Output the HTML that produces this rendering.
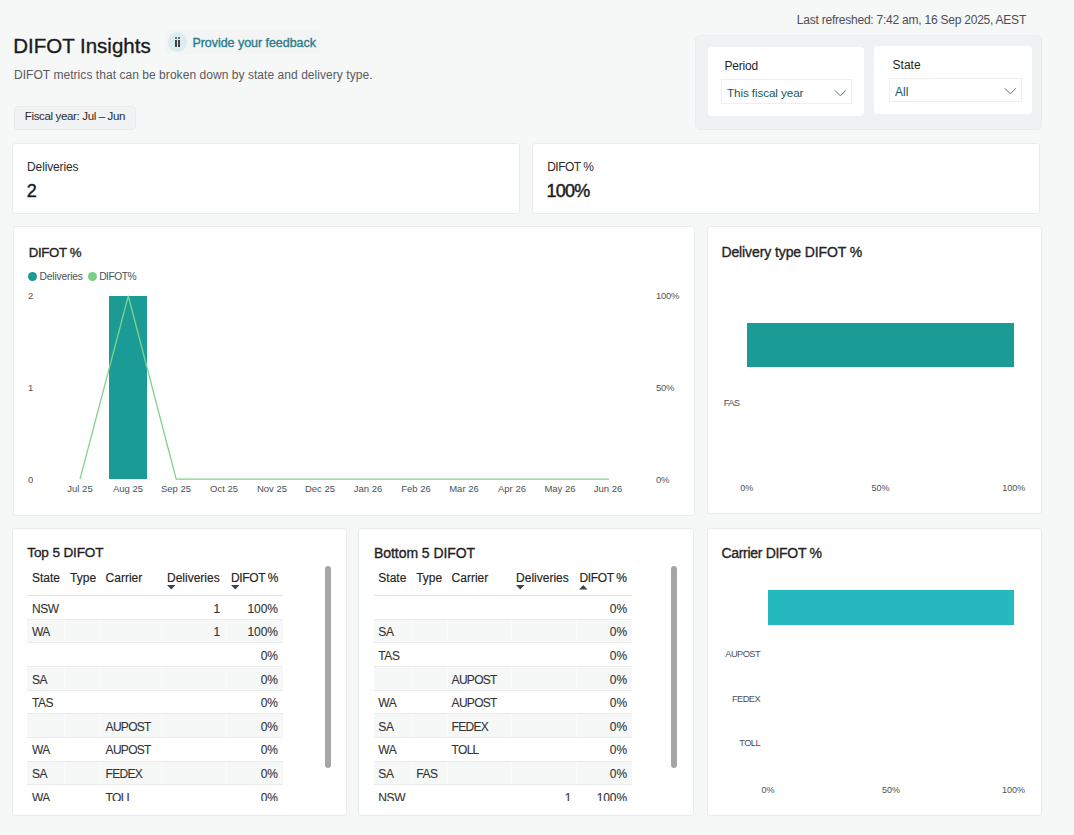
<!DOCTYPE html>
<html><head><meta charset="utf-8"><title>DIFOT Insights</title>
<style>
html,body{margin:0;padding:0;}
body{width:1074px;height:835px;overflow:hidden;background:#f6f7f7;position:relative;font-family:"Liberation Sans",sans-serif;}
.t{position:absolute;white-space:nowrap;}
.r{position:absolute;}
</style></head><body>
<div class="t" style="right:48.00px;top:13.74px;font-size:12px;line-height:12px;color:#4b4f54;letter-spacing:-0.23px;">Last refreshed: 7:42 am, 16 Sep 2025, AEST</div>
<div class="t" style="left:13.20px;top:35.65px;font-size:20.5px;line-height:20.5px;color:#1b1b1b;-webkit-text-stroke:0.35px #1b1b1b;">DIFOT Insights</div>
<div class="r" style="left:165.00px;top:30.00px;width:155.00px;height:24.00px;background:#f3f4f4;border-radius:4px;"></div>
<div class="r" style="left:167.70px;top:32.20px;width:19.40px;height:19.40px;background:#dbedf2;border-radius:50%;"></div>
<div class="r" style="left:174.80px;top:37.20px;width:2.30px;height:1.80px;background:#3f4244;border-radius:1px;"></div>
<div class="r" style="left:177.80px;top:37.20px;width:2.30px;height:1.80px;background:#3f4244;border-radius:1px;"></div>
<div class="r" style="left:174.80px;top:40.20px;width:2.30px;height:6.60px;background:#3f4244;"></div>
<div class="r" style="left:177.80px;top:40.20px;width:2.30px;height:6.60px;background:#3f4244;"></div>
<div class="t" style="left:192.40px;top:37.22px;font-size:12.5px;line-height:12.5px;color:#2b7c89;letter-spacing:-0.04px;-webkit-text-stroke:0.35px #2b7c89;">Provide your feedback</div>
<div class="t" style="left:14.00px;top:69.24px;font-size:12px;line-height:12px;color:#565b61;letter-spacing:0.05px;">DIFOT metrics that can be broken down by state and delivery type.</div>
<div class="r" style="left:14.00px;top:106.00px;width:122.00px;height:24.00px;background:#f0f2f3;border:1px solid #e7e9eb;border-radius:4px;box-sizing:border-box;"></div>
<div class="t" style="left:24.80px;top:110.67px;font-size:11.5px;line-height:11.5px;color:#2b2b2b;letter-spacing:-0.35px;">Fiscal year: Jul – Jun</div>
<div class="r" style="left:695.00px;top:35.00px;width:346.50px;height:94.50px;background:#eff1f3;border:1px solid #e9ebed;border-radius:5px;box-sizing:border-box;"></div>
<div class="r" style="left:708.00px;top:47.00px;width:156.00px;height:69.00px;background:#fff;border-radius:4px;"></div>
<div class="t" style="left:724.50px;top:59.64px;font-size:12px;line-height:12px;color:#1f1f1f;letter-spacing:-0.2px;">Period</div>
<div class="r" style="left:721.00px;top:79.00px;width:131.00px;height:24.50px;background:#fff;border:1px solid #eeefef;box-sizing:border-box;"></div>
<div class="t" style="left:727.00px;top:87.10px;font-size:11.7px;line-height:11.7px;color:#145a59;letter-spacing:-0.1px;">This fiscal year</div>
<svg class="r" style="left:833px;top:88px" width="15" height="10"><polyline points="1.8,2.3 7.3,7.8 12.8,2.3" fill="none" stroke="#3d7b7b" stroke-width="1"/></svg>
<div class="r" style="left:874.00px;top:46.00px;width:158.00px;height:68.00px;background:#fff;border-radius:4px;"></div>
<div class="t" style="left:892.60px;top:58.84px;font-size:12px;line-height:12px;color:#1f1f1f;">State</div>
<div class="r" style="left:889.00px;top:77.50px;width:133.00px;height:24.50px;background:#fff;border:1px solid #eeefef;box-sizing:border-box;"></div>
<div class="t" style="left:895.00px;top:86.24px;font-size:12px;line-height:12px;color:#145a59;">All</div>
<svg class="r" style="left:1002.5px;top:86px" width="15" height="10"><polyline points="1.8,2.3 7.3,7.8 12.8,2.3" fill="none" stroke="#3d7b7b" stroke-width="1"/></svg>
<div class="r" style="left:12.00px;top:143.00px;width:508.00px;height:71.00px;background:#fff;border:1px solid #e8eaec;border-radius:3.5px;box-sizing:border-box;"></div>
<div class="t" style="left:27.10px;top:161.44px;font-size:12px;line-height:12px;color:#2b2b2b;letter-spacing:-0.15px;">Deliveries</div>
<div class="t" style="left:26.80px;top:182.36px;font-size:18px;line-height:18px;color:#1b1b1b;-webkit-text-stroke:0.45px #1b1b1b;">2</div>
<div class="r" style="left:532.00px;top:143.00px;width:508.00px;height:71.00px;background:#fff;border:1px solid #e8eaec;border-radius:3.5px;box-sizing:border-box;"></div>
<div class="t" style="left:547.20px;top:161.24px;font-size:12px;line-height:12px;color:#2b2b2b;letter-spacing:-0.5px;">DIFOT %</div>
<div class="t" style="left:546.50px;top:182.36px;font-size:18px;line-height:18px;color:#1b1b1b;letter-spacing:-0.75px;-webkit-text-stroke:0.45px #1b1b1b;">100%</div>
<div class="r" style="left:13.00px;top:226.00px;width:682.00px;height:290.00px;background:#fff;border:1px solid #e8eaec;border-radius:3.5px;box-sizing:border-box;"></div>
<div class="t" style="left:28.70px;top:245.83px;font-size:13.2px;line-height:13.2px;color:#252423;letter-spacing:-0.3px;-webkit-text-stroke:0.35px #252423;">DIFOT %</div>
<div class="r" style="left:28.00px;top:272.00px;width:9.00px;height:9.00px;background:#1b9b95;border-radius:50%;"></div>
<div class="t" style="left:39.60px;top:271.68px;font-size:10.3px;line-height:10.3px;color:#4b5157;letter-spacing:-0.2px;">Deliveries</div>
<div class="r" style="left:87.70px;top:272.00px;width:9.00px;height:9.00px;background:#7ccf88;border-radius:50%;"></div>
<div class="t" style="left:99.20px;top:271.68px;font-size:10.3px;line-height:10.3px;color:#4b5157;letter-spacing:-0.5px;">DIFOT%</div>
<div class="t" style="left:28.00px;top:290.96px;font-size:9.5px;line-height:9.5px;color:#555;">2</div>
<div class="t" style="left:28.00px;top:382.96px;font-size:9.5px;line-height:9.5px;color:#555;">1</div>
<div class="t" style="left:28.00px;top:474.96px;font-size:9.5px;line-height:9.5px;color:#555;">0</div>
<div class="t" style="left:656.00px;top:291.16px;font-size:9.5px;line-height:9.5px;color:#555;letter-spacing:-0.3px;">100%</div>
<div class="t" style="left:656.00px;top:383.16px;font-size:9.5px;line-height:9.5px;color:#555;letter-spacing:-0.3px;">50%</div>
<div class="t" style="left:656.00px;top:475.16px;font-size:9.5px;line-height:9.5px;color:#555;letter-spacing:-0.3px;">0%</div>
<div class="r" style="left:109.00px;top:296.00px;width:38.00px;height:183.00px;background:#1b9b95;"></div>
<svg class="r" style="left:0;top:0" width="700" height="520"><polyline points="80,479.2 128.3,296 176.2,479.2 609,479.2" fill="none" stroke="#80d18b" stroke-width="1.3" stroke-linejoin="round"/></svg>
<div class="t" style="left:-120.00px;width:400px;text-align:center;top:483.56px;font-size:9.5px;line-height:9.5px;color:#4b5157;">Jul 25</div>
<div class="t" style="left:-72.00px;width:400px;text-align:center;top:483.56px;font-size:9.5px;line-height:9.5px;color:#4b5157;">Aug 25</div>
<div class="t" style="left:-24.00px;width:400px;text-align:center;top:483.56px;font-size:9.5px;line-height:9.5px;color:#4b5157;">Sep 25</div>
<div class="t" style="left:24.00px;width:400px;text-align:center;top:483.56px;font-size:9.5px;line-height:9.5px;color:#4b5157;">Oct 25</div>
<div class="t" style="left:72.00px;width:400px;text-align:center;top:483.56px;font-size:9.5px;line-height:9.5px;color:#4b5157;">Nov 25</div>
<div class="t" style="left:120.00px;width:400px;text-align:center;top:483.56px;font-size:9.5px;line-height:9.5px;color:#4b5157;">Dec 25</div>
<div class="t" style="left:168.00px;width:400px;text-align:center;top:483.56px;font-size:9.5px;line-height:9.5px;color:#4b5157;">Jan 26</div>
<div class="t" style="left:216.00px;width:400px;text-align:center;top:483.56px;font-size:9.5px;line-height:9.5px;color:#4b5157;">Feb 26</div>
<div class="t" style="left:264.00px;width:400px;text-align:center;top:483.56px;font-size:9.5px;line-height:9.5px;color:#4b5157;">Mar 26</div>
<div class="t" style="left:312.00px;width:400px;text-align:center;top:483.56px;font-size:9.5px;line-height:9.5px;color:#4b5157;">Apr 26</div>
<div class="t" style="left:360.00px;width:400px;text-align:center;top:483.56px;font-size:9.5px;line-height:9.5px;color:#4b5157;">May 26</div>
<div class="t" style="left:408.00px;width:400px;text-align:center;top:483.56px;font-size:9.5px;line-height:9.5px;color:#4b5157;">Jun 26</div>
<div class="r" style="left:707.00px;top:226.00px;width:335.00px;height:288.00px;background:#fff;border:1px solid #e8eaec;border-radius:3.5px;box-sizing:border-box;"></div>
<div class="t" style="left:721.40px;top:244.95px;font-size:14px;line-height:14px;color:#252423;letter-spacing:-0.1px;-webkit-text-stroke:0.35px #252423;">Delivery type DIFOT %</div>
<div class="r" style="left:746.70px;top:322.80px;width:267.00px;height:43.80px;background:#1b9b95;"></div>
<div class="t" style="left:723.70px;top:399.13px;font-size:9.3px;line-height:9.3px;color:#4b5157;letter-spacing:-0.6px;">FAS</div>
<div class="t" style="left:546.70px;width:400px;text-align:center;top:484.08px;font-size:9px;line-height:9px;color:#4b5157;">0%</div>
<div class="t" style="left:680.40px;width:400px;text-align:center;top:484.08px;font-size:9px;line-height:9px;color:#4b5157;">50%</div>
<div class="t" style="left:813.70px;width:400px;text-align:center;top:484.08px;font-size:9px;line-height:9px;color:#4b5157;">100%</div>
<div class="r" style="left:707.00px;top:528.00px;width:335.00px;height:288.00px;background:#fff;border:1px solid #e8eaec;border-radius:3.5px;box-sizing:border-box;"></div>
<div class="t" style="left:721.40px;top:545.95px;font-size:14px;line-height:14px;color:#252423;letter-spacing:-0.3px;-webkit-text-stroke:0.35px #252423;">Carrier DIFOT %</div>
<div class="r" style="left:768.00px;top:590.00px;width:245.60px;height:34.50px;background:#25b9bf;"></div>
<div class="t" style="right:314.00px;top:649.63px;font-size:9.3px;line-height:9.3px;color:#4b5157;letter-spacing:-0.6px;">AUPOST</div>
<div class="t" style="right:314.00px;top:694.53px;font-size:9.3px;line-height:9.3px;color:#4b5157;letter-spacing:-0.6px;">FEDEX</div>
<div class="t" style="right:314.00px;top:739.43px;font-size:9.3px;line-height:9.3px;color:#4b5157;letter-spacing:-0.6px;">TOLL</div>
<div class="t" style="left:567.90px;width:400px;text-align:center;top:786.18px;font-size:9px;line-height:9px;color:#4b5157;">0%</div>
<div class="t" style="left:691.00px;width:400px;text-align:center;top:786.18px;font-size:9px;line-height:9px;color:#4b5157;">50%</div>
<div class="t" style="left:813.60px;width:400px;text-align:center;top:786.18px;font-size:9px;line-height:9px;color:#4b5157;">100%</div>
<div class="r" style="left:12.00px;top:528.00px;width:335.00px;height:288.00px;background:#fff;border:1px solid #e8eaec;border-radius:3.5px;box-sizing:border-box;"></div>
<div class="t" style="left:27.30px;top:546.39px;font-size:13.6px;line-height:13.6px;color:#1f1f1f;letter-spacing:-0.15px;-webkit-text-stroke:0.35px #1f1f1f;">Top 5 DIFOT</div>
<div class="t" style="left:31.90px;top:572.24px;font-size:12px;line-height:12px;color:#252423;-webkit-text-stroke:0.15px #252423;">State</div>
<div class="t" style="left:70.10px;top:572.24px;font-size:12px;line-height:12px;color:#252423;-webkit-text-stroke:0.15px #252423;">Type</div>
<div class="t" style="left:105.60px;top:572.24px;font-size:12px;line-height:12px;color:#252423;-webkit-text-stroke:0.15px #252423;">Carrier</div>
<div class="t" style="left:167.00px;top:572.24px;font-size:12px;line-height:12px;color:#252423;-webkit-text-stroke:0.15px #252423;">Deliveries</div>
<div class="t" style="left:231.10px;top:572.24px;font-size:12px;line-height:12px;color:#252423;letter-spacing:-0.4px;-webkit-text-stroke:0.15px #252423;">DIFOT %</div>
<svg class="r" style="left:167.00px;top:585px" width="9" height="5"><polygon points="0,0 8.5,0 4.25,4.5" fill="#3b4550"/></svg>
<svg class="r" style="left:230.90px;top:585px" width="9" height="5"><polygon points="0,0 8.5,0 4.25,4.5" fill="#3b4550"/></svg>
<div class="r" style="left:27.30px;top:594.70px;width:255.70px;height:1.30px;background:#dfe2e5;"></div>
<div class="r" style="left:27.30px;top:596px;width:255.7px;height:204.7px;overflow:hidden;"><div class="r" style="left:0.00px;top:0.00px;width:255.70px;height:23.65px;background:#fff;border-bottom:1px solid #e9ebed;box-sizing:border-box;"></div><div class="r" style="left:0.00px;top:23.65px;width:255.70px;height:23.65px;background:#f6f7f7;border-bottom:1px solid #e9ebed;box-sizing:border-box;"></div><div class="r" style="left:36.90px;top:23.65px;width:1.00px;height:22.65px;background:#fbfbfb;"></div><div class="r" style="left:72.80px;top:23.65px;width:1.00px;height:22.65px;background:#fbfbfb;"></div><div class="r" style="left:134.20px;top:23.65px;width:1.00px;height:22.65px;background:#fbfbfb;"></div><div class="r" style="left:198.40px;top:23.65px;width:1.00px;height:22.65px;background:#fbfbfb;"></div><div class="r" style="left:0.00px;top:47.30px;width:255.70px;height:23.65px;background:#fff;border-bottom:1px solid #e9ebed;box-sizing:border-box;"></div><div class="r" style="left:0.00px;top:70.95px;width:255.70px;height:23.65px;background:#f6f7f7;border-bottom:1px solid #e9ebed;box-sizing:border-box;"></div><div class="r" style="left:36.90px;top:70.95px;width:1.00px;height:22.65px;background:#fbfbfb;"></div><div class="r" style="left:72.80px;top:70.95px;width:1.00px;height:22.65px;background:#fbfbfb;"></div><div class="r" style="left:134.20px;top:70.95px;width:1.00px;height:22.65px;background:#fbfbfb;"></div><div class="r" style="left:198.40px;top:70.95px;width:1.00px;height:22.65px;background:#fbfbfb;"></div><div class="r" style="left:0.00px;top:94.60px;width:255.70px;height:23.65px;background:#fff;border-bottom:1px solid #e9ebed;box-sizing:border-box;"></div><div class="r" style="left:0.00px;top:118.25px;width:255.70px;height:23.65px;background:#f6f7f7;border-bottom:1px solid #e9ebed;box-sizing:border-box;"></div><div class="r" style="left:36.90px;top:118.25px;width:1.00px;height:22.65px;background:#fbfbfb;"></div><div class="r" style="left:72.80px;top:118.25px;width:1.00px;height:22.65px;background:#fbfbfb;"></div><div class="r" style="left:134.20px;top:118.25px;width:1.00px;height:22.65px;background:#fbfbfb;"></div><div class="r" style="left:198.40px;top:118.25px;width:1.00px;height:22.65px;background:#fbfbfb;"></div><div class="r" style="left:0.00px;top:141.90px;width:255.70px;height:23.65px;background:#fff;border-bottom:1px solid #e9ebed;box-sizing:border-box;"></div><div class="r" style="left:0.00px;top:165.55px;width:255.70px;height:23.65px;background:#f6f7f7;border-bottom:1px solid #e9ebed;box-sizing:border-box;"></div><div class="r" style="left:36.90px;top:165.55px;width:1.00px;height:22.65px;background:#fbfbfb;"></div><div class="r" style="left:72.80px;top:165.55px;width:1.00px;height:22.65px;background:#fbfbfb;"></div><div class="r" style="left:134.20px;top:165.55px;width:1.00px;height:22.65px;background:#fbfbfb;"></div><div class="r" style="left:198.40px;top:165.55px;width:1.00px;height:22.65px;background:#fbfbfb;"></div><div class="r" style="left:0.00px;top:189.20px;width:255.70px;height:23.65px;background:#fff;border-bottom:1px solid #e9ebed;box-sizing:border-box;"></div><div class="t" style="left:4.60px;top:6.74px;font-size:12px;line-height:12px;color:#333;letter-spacing:-0.4px;-webkit-text-stroke:0.1px #333;">NSW</div><div class="t" style="right:62.80px;top:6.74px;font-size:12px;line-height:12px;color:#333;-webkit-text-stroke:0.1px #333;">1</div><div class="t" style="right:5.20px;top:6.74px;font-size:12px;line-height:12px;color:#333;letter-spacing:-0.1px;-webkit-text-stroke:0.1px #333;">100%</div><div class="t" style="left:4.60px;top:30.34px;font-size:12px;line-height:12px;color:#333;letter-spacing:-0.4px;-webkit-text-stroke:0.1px #333;">WA</div><div class="t" style="right:62.80px;top:30.34px;font-size:12px;line-height:12px;color:#333;-webkit-text-stroke:0.1px #333;">1</div><div class="t" style="right:5.20px;top:30.34px;font-size:12px;line-height:12px;color:#333;letter-spacing:-0.1px;-webkit-text-stroke:0.1px #333;">100%</div><div class="t" style="right:5.20px;top:53.94px;font-size:12px;line-height:12px;color:#333;letter-spacing:-0.1px;-webkit-text-stroke:0.1px #333;">0%</div><div class="t" style="left:4.60px;top:77.54px;font-size:12px;line-height:12px;color:#333;letter-spacing:-0.4px;-webkit-text-stroke:0.1px #333;">SA</div><div class="t" style="right:5.20px;top:77.54px;font-size:12px;line-height:12px;color:#333;letter-spacing:-0.1px;-webkit-text-stroke:0.1px #333;">0%</div><div class="t" style="left:4.60px;top:101.14px;font-size:12px;line-height:12px;color:#333;letter-spacing:-0.4px;-webkit-text-stroke:0.1px #333;">TAS</div><div class="t" style="right:5.20px;top:101.14px;font-size:12px;line-height:12px;color:#333;letter-spacing:-0.1px;-webkit-text-stroke:0.1px #333;">0%</div><div class="t" style="left:78.30px;top:124.74px;font-size:12px;line-height:12px;color:#333;letter-spacing:-0.7px;-webkit-text-stroke:0.1px #333;">AUPOST</div><div class="t" style="right:5.20px;top:124.74px;font-size:12px;line-height:12px;color:#333;letter-spacing:-0.1px;-webkit-text-stroke:0.1px #333;">0%</div><div class="t" style="left:4.60px;top:148.34px;font-size:12px;line-height:12px;color:#333;letter-spacing:-0.4px;-webkit-text-stroke:0.1px #333;">WA</div><div class="t" style="left:78.30px;top:148.34px;font-size:12px;line-height:12px;color:#333;letter-spacing:-0.7px;-webkit-text-stroke:0.1px #333;">AUPOST</div><div class="t" style="right:5.20px;top:148.34px;font-size:12px;line-height:12px;color:#333;letter-spacing:-0.1px;-webkit-text-stroke:0.1px #333;">0%</div><div class="t" style="left:4.60px;top:171.94px;font-size:12px;line-height:12px;color:#333;letter-spacing:-0.4px;-webkit-text-stroke:0.1px #333;">SA</div><div class="t" style="left:78.30px;top:171.94px;font-size:12px;line-height:12px;color:#333;letter-spacing:-0.7px;-webkit-text-stroke:0.1px #333;">FEDEX</div><div class="t" style="right:5.20px;top:171.94px;font-size:12px;line-height:12px;color:#333;letter-spacing:-0.1px;-webkit-text-stroke:0.1px #333;">0%</div><div class="t" style="left:4.60px;top:195.54px;font-size:12px;line-height:12px;color:#333;letter-spacing:-0.4px;-webkit-text-stroke:0.1px #333;">WA</div><div class="t" style="left:78.30px;top:195.54px;font-size:12px;line-height:12px;color:#333;letter-spacing:-0.7px;-webkit-text-stroke:0.1px #333;">TOLL</div><div class="t" style="right:5.20px;top:195.54px;font-size:12px;line-height:12px;color:#333;letter-spacing:-0.1px;-webkit-text-stroke:0.1px #333;">0%</div></div>
<div class="r" style="left:325.00px;top:566.00px;width:6.00px;height:202.00px;background:#a6a6a6;border-radius:3px;"></div>
<div class="r" style="left:358.00px;top:528.00px;width:336.00px;height:288.00px;background:#fff;border:1px solid #e8eaec;border-radius:3.5px;box-sizing:border-box;"></div>
<div class="t" style="left:374.00px;top:546.05px;font-size:14px;line-height:14px;color:#1f1f1f;letter-spacing:-0.06px;-webkit-text-stroke:0.35px #1f1f1f;">Bottom 5 DIFOT</div>
<div class="t" style="left:378.30px;top:572.24px;font-size:12px;line-height:12px;color:#252423;-webkit-text-stroke:0.15px #252423;">State</div>
<div class="t" style="left:416.20px;top:572.24px;font-size:12px;line-height:12px;color:#252423;-webkit-text-stroke:0.15px #252423;">Type</div>
<div class="t" style="left:451.60px;top:572.24px;font-size:12px;line-height:12px;color:#252423;-webkit-text-stroke:0.15px #252423;">Carrier</div>
<div class="t" style="left:516.10px;top:572.24px;font-size:12px;line-height:12px;color:#252423;-webkit-text-stroke:0.15px #252423;">Deliveries</div>
<div class="t" style="left:579.60px;top:572.24px;font-size:12px;line-height:12px;color:#252423;letter-spacing:-0.4px;-webkit-text-stroke:0.15px #252423;">DIFOT %</div>
<svg class="r" style="left:516.10px;top:585px" width="9" height="5"><polygon points="0,0 8.5,0 4.25,4.5" fill="#3b4550"/></svg>
<svg class="r" style="left:579.40px;top:585px" width="9" height="5"><polygon points="0,4.5 8.5,4.5 4.25,0" fill="#3b4550"/></svg>
<div class="r" style="left:374.00px;top:594.70px;width:257.80px;height:1.30px;background:#dfe2e5;"></div>
<div class="r" style="left:374.00px;top:596px;width:257.8px;height:204.7px;overflow:hidden;"><div class="r" style="left:0.00px;top:0.00px;width:257.80px;height:23.65px;background:#fff;border-bottom:1px solid #e9ebed;box-sizing:border-box;"></div><div class="r" style="left:0.00px;top:23.65px;width:257.80px;height:23.65px;background:#f6f7f7;border-bottom:1px solid #e9ebed;box-sizing:border-box;"></div><div class="r" style="left:37.10px;top:23.65px;width:1.00px;height:22.65px;background:#fbfbfb;"></div><div class="r" style="left:72.90px;top:23.65px;width:1.00px;height:22.65px;background:#fbfbfb;"></div><div class="r" style="left:137.00px;top:23.65px;width:1.00px;height:22.65px;background:#fbfbfb;"></div><div class="r" style="left:201.50px;top:23.65px;width:1.00px;height:22.65px;background:#fbfbfb;"></div><div class="r" style="left:0.00px;top:47.30px;width:257.80px;height:23.65px;background:#fff;border-bottom:1px solid #e9ebed;box-sizing:border-box;"></div><div class="r" style="left:0.00px;top:70.95px;width:257.80px;height:23.65px;background:#f6f7f7;border-bottom:1px solid #e9ebed;box-sizing:border-box;"></div><div class="r" style="left:37.10px;top:70.95px;width:1.00px;height:22.65px;background:#fbfbfb;"></div><div class="r" style="left:72.90px;top:70.95px;width:1.00px;height:22.65px;background:#fbfbfb;"></div><div class="r" style="left:137.00px;top:70.95px;width:1.00px;height:22.65px;background:#fbfbfb;"></div><div class="r" style="left:201.50px;top:70.95px;width:1.00px;height:22.65px;background:#fbfbfb;"></div><div class="r" style="left:0.00px;top:94.60px;width:257.80px;height:23.65px;background:#fff;border-bottom:1px solid #e9ebed;box-sizing:border-box;"></div><div class="r" style="left:0.00px;top:118.25px;width:257.80px;height:23.65px;background:#f6f7f7;border-bottom:1px solid #e9ebed;box-sizing:border-box;"></div><div class="r" style="left:37.10px;top:118.25px;width:1.00px;height:22.65px;background:#fbfbfb;"></div><div class="r" style="left:72.90px;top:118.25px;width:1.00px;height:22.65px;background:#fbfbfb;"></div><div class="r" style="left:137.00px;top:118.25px;width:1.00px;height:22.65px;background:#fbfbfb;"></div><div class="r" style="left:201.50px;top:118.25px;width:1.00px;height:22.65px;background:#fbfbfb;"></div><div class="r" style="left:0.00px;top:141.90px;width:257.80px;height:23.65px;background:#fff;border-bottom:1px solid #e9ebed;box-sizing:border-box;"></div><div class="r" style="left:0.00px;top:165.55px;width:257.80px;height:23.65px;background:#f6f7f7;border-bottom:1px solid #e9ebed;box-sizing:border-box;"></div><div class="r" style="left:37.10px;top:165.55px;width:1.00px;height:22.65px;background:#fbfbfb;"></div><div class="r" style="left:72.90px;top:165.55px;width:1.00px;height:22.65px;background:#fbfbfb;"></div><div class="r" style="left:137.00px;top:165.55px;width:1.00px;height:22.65px;background:#fbfbfb;"></div><div class="r" style="left:201.50px;top:165.55px;width:1.00px;height:22.65px;background:#fbfbfb;"></div><div class="r" style="left:0.00px;top:189.20px;width:257.80px;height:23.65px;background:#fff;border-bottom:1px solid #e9ebed;box-sizing:border-box;"></div><div class="t" style="right:4.80px;top:6.74px;font-size:12px;line-height:12px;color:#333;letter-spacing:-0.1px;-webkit-text-stroke:0.1px #333;">0%</div><div class="t" style="left:4.30px;top:30.34px;font-size:12px;line-height:12px;color:#333;letter-spacing:-0.4px;-webkit-text-stroke:0.1px #333;">SA</div><div class="t" style="right:4.80px;top:30.34px;font-size:12px;line-height:12px;color:#333;letter-spacing:-0.1px;-webkit-text-stroke:0.1px #333;">0%</div><div class="t" style="left:4.30px;top:53.94px;font-size:12px;line-height:12px;color:#333;letter-spacing:-0.4px;-webkit-text-stroke:0.1px #333;">TAS</div><div class="t" style="right:4.80px;top:53.94px;font-size:12px;line-height:12px;color:#333;letter-spacing:-0.1px;-webkit-text-stroke:0.1px #333;">0%</div><div class="t" style="left:77.60px;top:77.54px;font-size:12px;line-height:12px;color:#333;letter-spacing:-0.7px;-webkit-text-stroke:0.1px #333;">AUPOST</div><div class="t" style="right:4.80px;top:77.54px;font-size:12px;line-height:12px;color:#333;letter-spacing:-0.1px;-webkit-text-stroke:0.1px #333;">0%</div><div class="t" style="left:4.30px;top:101.14px;font-size:12px;line-height:12px;color:#333;letter-spacing:-0.4px;-webkit-text-stroke:0.1px #333;">WA</div><div class="t" style="left:77.60px;top:101.14px;font-size:12px;line-height:12px;color:#333;letter-spacing:-0.7px;-webkit-text-stroke:0.1px #333;">AUPOST</div><div class="t" style="right:4.80px;top:101.14px;font-size:12px;line-height:12px;color:#333;letter-spacing:-0.1px;-webkit-text-stroke:0.1px #333;">0%</div><div class="t" style="left:4.30px;top:124.74px;font-size:12px;line-height:12px;color:#333;letter-spacing:-0.4px;-webkit-text-stroke:0.1px #333;">SA</div><div class="t" style="left:77.60px;top:124.74px;font-size:12px;line-height:12px;color:#333;letter-spacing:-0.7px;-webkit-text-stroke:0.1px #333;">FEDEX</div><div class="t" style="right:4.80px;top:124.74px;font-size:12px;line-height:12px;color:#333;letter-spacing:-0.1px;-webkit-text-stroke:0.1px #333;">0%</div><div class="t" style="left:4.30px;top:148.34px;font-size:12px;line-height:12px;color:#333;letter-spacing:-0.4px;-webkit-text-stroke:0.1px #333;">WA</div><div class="t" style="left:77.60px;top:148.34px;font-size:12px;line-height:12px;color:#333;letter-spacing:-0.7px;-webkit-text-stroke:0.1px #333;">TOLL</div><div class="t" style="right:4.80px;top:148.34px;font-size:12px;line-height:12px;color:#333;letter-spacing:-0.1px;-webkit-text-stroke:0.1px #333;">0%</div><div class="t" style="left:4.30px;top:171.94px;font-size:12px;line-height:12px;color:#333;letter-spacing:-0.4px;-webkit-text-stroke:0.1px #333;">SA</div><div class="t" style="left:42.20px;top:171.94px;font-size:12px;line-height:12px;color:#333;letter-spacing:-0.4px;-webkit-text-stroke:0.1px #333;">FAS</div><div class="t" style="right:4.80px;top:171.94px;font-size:12px;line-height:12px;color:#333;letter-spacing:-0.1px;-webkit-text-stroke:0.1px #333;">0%</div><div class="t" style="left:4.30px;top:195.54px;font-size:12px;line-height:12px;color:#333;letter-spacing:-0.4px;-webkit-text-stroke:0.1px #333;">NSW</div><div class="t" style="right:60.30px;top:195.54px;font-size:12px;line-height:12px;color:#333;-webkit-text-stroke:0.1px #333;">1</div><div class="t" style="right:4.80px;top:195.54px;font-size:12px;line-height:12px;color:#333;letter-spacing:-0.1px;-webkit-text-stroke:0.1px #333;">100%</div></div>
<div class="r" style="left:671.00px;top:566.00px;width:6.00px;height:202.00px;background:#a6a6a6;border-radius:3px;"></div>
</body></html>
